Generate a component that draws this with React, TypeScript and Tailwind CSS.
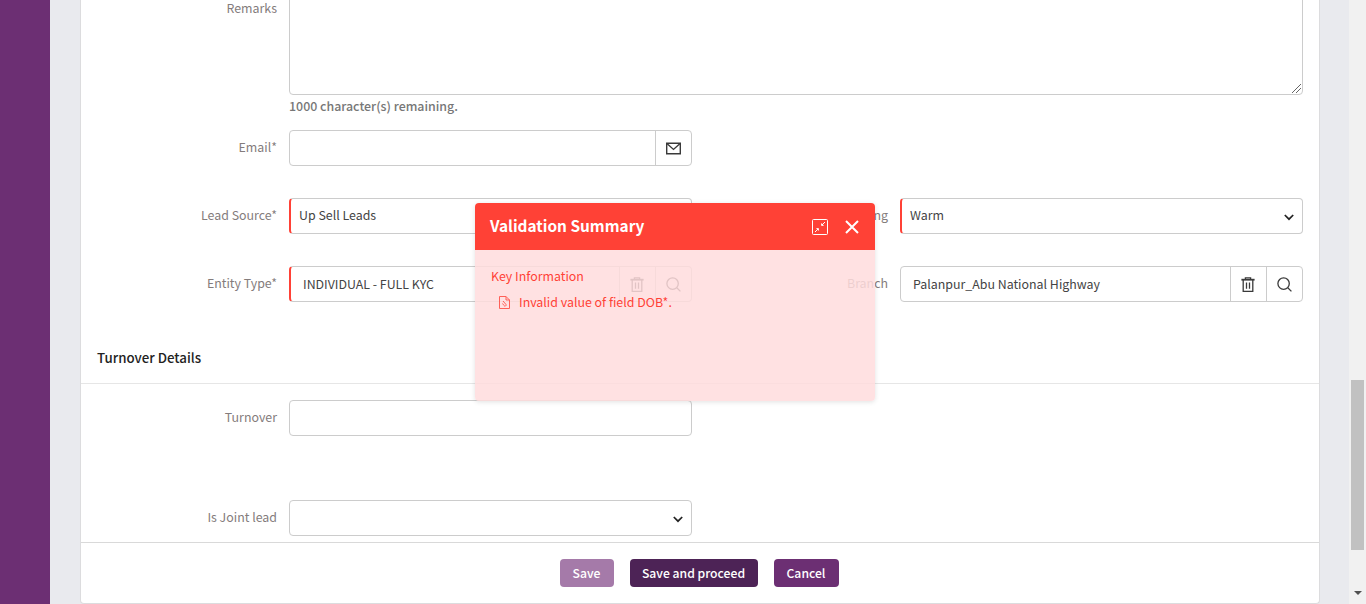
import { ReactNode } from "react";

function Label({ children }: { children: ReactNode }) {
  return (
    <div className="text-right text-[12.4px] leading-[20px] text-[#847c7c] pt-[7px] whitespace-nowrap">
      {children}
    </div>
  );
}

function Addon({ children }: { children: ReactNode }) {
  return (
    <div className="w-[36px] shrink-0 border-l border-[#ccc] flex items-center justify-center text-[#3a3a3a]">
      {children}
    </div>
  );
}

function TrashIcon() {
  return (
    <svg width="14" height="15" viewBox="0 0 14 15" fill="none" stroke="currentColor" strokeWidth="1.3" className="-ml-px">
      <path d="M0.4 2.7h13.2" strokeWidth="1.8" />
      <path d="M4.4 2V0.8h5.2V2" />
      <path d="M2.2 3v11.3h9.6V3" />
      <path d="M5.5 5.6v6.2M8.5 5.6v6.2" />
    </svg>
  );
}

function SearchIcon() {
  return (
    <svg width="15" height="15" viewBox="0 0 15 15" fill="none" stroke="currentColor" strokeWidth="1.3">
      <circle cx="6.6" cy="6.6" r="5.7" />
      <path d="M10.8 10.8l3.6 3.6" />
    </svg>
  );
}

function MailIcon() {
  return (
    <svg width="15" height="13" viewBox="0 0 15 13" fill="none" stroke="currentColor" strokeWidth="1.4" className="-ml-px">
      <path d="M0.7 1.2h13.6v10.6H0.7z" />
      <path d="M0.9 1.4l6.6 6 6.6-6" />
    </svg>
  );
}

function Chevron() {
  return (
    <svg width="10" height="7" viewBox="0 0 10 7" fill="none" stroke="#222" strokeWidth="1.7" className="absolute right-[8px] top-[15px]">
      <path d="M0.8 1l4.2 4.2L9.2 1" />
    </svg>
  );
}

function SelectBox({ value, required }: { value?: string; required?: boolean }) {
  return (
    <div
      className={`relative h-[36px] rounded-[4px] border border-[#ccc] flex items-center text-[12.4px] text-[#444] pl-[8px] pb-[2px] ${
        required ? "border-l-2 border-l-[#ff4136]" : ""
      }`}
    >
      {value}
      <Chevron />
    </div>
  );
}

function Cell({ label, children }: { label?: string; children?: ReactNode }) {
  return (
    <div className="grid grid-cols-[196px_403px] gap-x-3">
      <Label>{label}</Label>
      <div>{children}</div>
    </div>
  );
}

function LookupBox({ value, required }: { value: string; required?: boolean }) {
  return (
    <div
      className={`h-[36px] rounded-[4px] border border-[#ccc] flex text-[12.4px] text-[#444] ${
        required ? "border-l-2 border-l-[#ff4136]" : ""
      }`}
    >
      <div className="flex-1 flex items-center pl-[12px]">{value}</div>
      <Addon>
        <TrashIcon />
      </Addon>
      <Addon>
        <SearchIcon />
      </Addon>
    </div>
  );
}

export default function App() {
  return (
    <div
      className="relative h-[604px] overflow-hidden flex bg-[#e9eaee]"
      style={{ fontFamily: '"Noto Sans CJK SC", "Noto Sans", sans-serif' }}
    >
      {/* sidebar */}
      <div className="w-[50px] shrink-0 bg-[#6c2f73]" />

      {/* page */}
      <div className="flex-1 pl-[30px] pr-[29px]">
        <div className="w-[1240px] h-[605px] -mt-px bg-white border-x border-b border-[#dcdcde] rounded-b-[4px] flex flex-col">
          <div className="h-[543px] overflow-hidden">
            {/* remarks */}
            <div className="grid grid-cols-[196px_1014px] gap-x-3">
              <div className="text-right text-[12.4px] leading-[20px] text-[#847c7c] -mt-px">Remarks</div>
              <div className="-mt-[30px]">
                <div className="relative h-[126px] rounded-[4px] border border-[#ccc]">
                  <svg width="10" height="10" viewBox="0 0 10 10" stroke="#666" strokeWidth="1" className="absolute right-px bottom-px">
                    <path d="M1 10L10 1M5 10l5-5" />
                  </svg>
                </div>
                <div className="mt-[1px] text-[12.4px] leading-[20px] font-medium text-[#777]">1000 character(s) remaining.</div>
              </div>
            </div>

            <div className="mt-[14px]">
              <Cell label="Email*">
                <div className="h-[36px] rounded-[4px] border border-[#ccc] flex">
                  <div className="flex-1" />
                  <Addon>
                    <MailIcon />
                  </Addon>
                </div>
              </Cell>
            </div>

            <div className="mt-[32px] grid grid-cols-[611px_611px]">
              <Cell label="Lead Source*">
                <SelectBox value="Up Sell Leads" required />
              </Cell>
              <Cell label="Lead Rating">
                <SelectBox value="Warm" required />
              </Cell>
            </div>

            <div className="mt-[32px] grid grid-cols-[611px_611px]">
              <Cell label="Entity Type*">
                <LookupBox value="INDIVIDUAL - FULL KYC" required />
              </Cell>
              <Cell label="Branch">
                <LookupBox value="Palanpur_Abu National Highway" />
              </Cell>
            </div>

            <div className="mt-[46px] h-[36px] pl-[16px] border-b border-[#e6e6e6] text-[13.3px] leading-[20px] font-medium text-[#222]">
              Turnover Details
            </div>

            <div className="mt-[16px]">
              <Cell label="Turnover">
                <div className="h-[36px] rounded-[4px] border border-[#ccc]" />
              </Cell>
            </div>

            <div className="mt-[64px]">
              <Cell label="Is Joint lead">
                <SelectBox />
              </Cell>
            </div>
          </div>

          {/* footer buttons */}
          <div className="flex-1 border-t border-[#d9d9d9] flex items-start justify-center gap-4 pt-[16px] pr-[2px] text-[12.2px] font-medium text-white">
            <button className="h-[28px] w-[54px] rounded-[4px] bg-[#a57aa9]">Save</button>
            <button className="h-[28px] w-[128px] rounded-[4px] bg-[#4d2356]">Save and proceed</button>
            <button className="h-[28px] w-[65px] rounded-[4px] bg-[#6c2f73]">Cancel</button>
          </div>
        </div>
      </div>

      {/* window scrollbar */}
      <div className="w-[17px] shrink-0 bg-[#f1f1f1] flex flex-col items-center">
        <div className="mt-[380px] w-[13px] h-[170px] bg-[#c1c1c1]" />
        <div className="mt-[41px] w-0 h-0 border-x-[4px] border-x-transparent border-t-[4px] border-t-[#505050]" />
      </div>

      {/* validation dialog */}
      <div className="absolute left-[475px] top-[203px] w-[400px] h-[198px] rounded-[4px] overflow-hidden shadow-[0_1px_5px_rgba(0,0,0,0.12)] flex flex-col">
        <div className="h-[47px] shrink-0 bg-[#ff4136] flex items-center pl-[15px] pr-[16px] text-white">
          <div className="flex-1 text-[15.4px] font-bold -mt-px">Validation Summary</div>
          <svg width="16" height="16" viewBox="0 0 16 16" fill="none" stroke="white" strokeWidth="1" className="mr-[17px]">
            <rect x="0.5" y="0.5" width="15" height="15" rx="1" />
            <path d="M3 13l3.2-3.2M4.4 9.6h2v2M13 3L9.8 6.2M9.6 4.4v2h2" />
          </svg>
          <svg width="14" height="14" viewBox="0 0 14 14" fill="none" stroke="white" strokeWidth="2">
            <path d="M1 1l12 12M13 1L1 13" />
          </svg>
        </div>
        <div className="flex-1 bg-[#ffdcdd]/85 text-[#ff4136] text-[12.4px] leading-[20px] pl-[16px] pt-[16px]">
          <div>Key Information</div>
          <div className="flex items-center mt-[6px] pl-[8px]">
            <svg width="11" height="13" viewBox="0 0 11 13" fill="none" stroke="currentColor" strokeWidth="1" className="mr-[9px] opacity-80">
              <path d="M0.5 0.5h6.5l3.5 3.5v8.5h-10z" />
              <path d="M7 0.5v3.5h3.5" />
              <path d="M4 5l3 3.5a1 1 0 0 1-2 1L3.5 7.5" />
            </svg>
            Invalid value of field DOB*.
          </div>
        </div>
      </div>
    </div>
  );
}
